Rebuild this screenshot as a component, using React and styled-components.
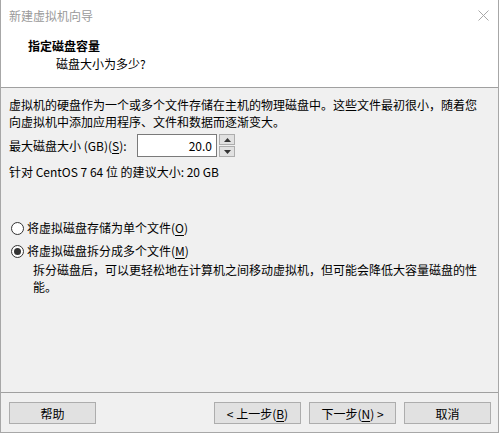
import React from "react";
import styled, { createGlobalStyle } from "styled-components";

const GlobalStyle = createGlobalStyle`
  html, body {
    margin: 0;
    padding: 0;
    background: #ffffff;
  }
  * {
    box-sizing: border-box;
  }
`;

const Window = styled.div`
  width: 499px;
  height: 433px;
  display: flex;
  flex-direction: column;
  border: 1px solid #a7a7a7;
  border-top: none;
  font-family: "Noto Sans CJK SC", "Noto Sans", sans-serif;
  font-size: 12px;
  line-height: 17px;
  color: #000;
  background: #f0f0f0;
`;

const TitleBar = styled.div`
  height: 30px;
  flex: none;
  display: flex;
  align-items: center;
  justify-content: space-between;
  padding: 0 9px 0 8px;
  background: #fff;
  color: #9a9a9a;
`;

const Header = styled.div`
  height: 58px;
  flex: none;
  padding: 7px 0 0 27px;
  background: #fff;
  border-bottom: 1px solid #a0a0a0;
`;

const HeaderTitle = styled.div`
  font-weight: 700;
`;

const HeaderSub = styled.div`
  margin: 1px 0 0 28px;
`;

const Body = styled.div`
  flex: 1;
  padding: 8px 15px 0 8px;
`;

const Paragraph = styled.p`
  margin: 0;
`;

const SizeRow = styled.div`
  display: flex;
  align-items: center;
  height: 23px;
  margin-top: 4px;
`;

const Label = styled.span`
  width: 128px;
  flex: none;
`;

const Input = styled.div`
  width: 80px;
  height: 23px;
  border: 1px solid #7a7a7a;
  background: #fff;
  display: flex;
  align-items: center;
  justify-content: flex-end;
  padding-right: 4px;
`;

const Spinner = styled.div`
  width: 16px;
  height: 23px;
  margin-left: 2px;
  display: flex;
  flex-direction: column;
  gap: 1px;
`;

const SpinButton = styled.div`
  flex: 1;
  border: 1px solid #adadad;
  background: #e1e1e1;
  display: flex;
  align-items: center;
  justify-content: center;
`;

const Note = styled.div`
  margin-top: 6px;
`;

const RadioGroup = styled.div`
  margin-top: 39px;
`;

const RadioRow = styled.label`
  display: flex;
  align-items: center;
  margin-top: ${(p) => (p.first ? "0" : "6px")};
`;

const RadioCircle = styled.span`
  width: 13px;
  height: 13px;
  margin: 2px 3px 0 2px;
  border-radius: 50%;
  border: 1px solid #333;
  background: #fff;
  display: flex;
  align-items: center;
  justify-content: center;
  &::after {
    content: "";
    display: ${(p) => (p.checked ? "block" : "none")};
    width: 7px;
    height: 7px;
    border-radius: 50%;
    background: #333;
  }
`;

const Description = styled.p`
  margin: 2px 0 0 24px;
`;

const Footer = styled.div`
  height: 40px;
  flex: none;
  display: flex;
  align-items: flex-start;
  padding: 9px 7px 0 8px;
  border-top: 1px solid #a0a0a0;
`;

const Button = styled.div`
  width: 87px;
  height: 22px;
  display: flex;
  align-items: center;
  justify-content: center;
  border: 1px solid #adadad;
  background: #e1e1e1;
  margin-left: ${(p) => p.gap || 0}px;
`;

const Spacer = styled.div`
  flex: 1;
`;

const Key = styled.span`
  text-decoration: underline;
  text-underline-offset: 2px;
`;

const Arrow = ({ up }) => (
  <svg width="7" height="4" viewBox="0 0 7 4">
    <path d={up ? "M0 4 L3.5 0 L7 4 Z" : "M0 0 L3.5 4 L7 0 Z"} fill="#333" />
  </svg>
);

const CloseIcon = () => (
  <svg width="11" height="11" viewBox="0 0 11 11">
    <path d="M0.5 0.5 L10.5 10.5 M10.5 0.5 L0.5 10.5" stroke="#a8a8a8" strokeWidth="1" />
  </svg>
);

export default function App() {
  return (
    <>
      <GlobalStyle />
      <Window>
        <TitleBar>
          <span>新建虚拟机向导</span>
          <CloseIcon />
        </TitleBar>
        <Header>
          <HeaderTitle>指定磁盘容量</HeaderTitle>
          <HeaderSub>磁盘大小为多少?</HeaderSub>
        </Header>
        <Body>
          <Paragraph>
            虚拟机的硬盘作为一个或多个文件存储在主机的物理磁盘中。这些文件最初很小，随着您向虚拟机中添加应用程序、文件和数据而逐渐变大。
          </Paragraph>
          <SizeRow>
            <Label>
              最大磁盘大小 (GB)(<Key>S</Key>):
            </Label>
            <Input>20.0</Input>
            <Spinner>
              <SpinButton>
                <Arrow up />
              </SpinButton>
              <SpinButton>
                <Arrow />
              </SpinButton>
            </Spinner>
          </SizeRow>
          <Note>针对 CentOS 7 64 位 的建议大小: 20 GB</Note>
          <RadioGroup>
            <RadioRow first>
              <RadioCircle />
              <span>
                将虚拟磁盘存储为单个文件(<Key>O</Key>)
              </span>
            </RadioRow>
            <RadioRow>
              <RadioCircle checked />
              <span>
                将虚拟磁盘拆分成多个文件(<Key>M</Key>)
              </span>
            </RadioRow>
            <Description>
              拆分磁盘后，可以更轻松地在计算机之间移动虚拟机，但可能会降低大容量磁盘的性能。
            </Description>
          </RadioGroup>
        </Body>
        <Footer>
          <Button>帮助</Button>
          <Spacer />
          <Button>
            &lt; 上一步(<Key>B</Key>)
          </Button>
          <Button gap={8}>
            下一步(<Key>N</Key>) &gt;
          </Button>
          <Button gap={8}>取消</Button>
        </Footer>
      </Window>
    </>
  );
}
